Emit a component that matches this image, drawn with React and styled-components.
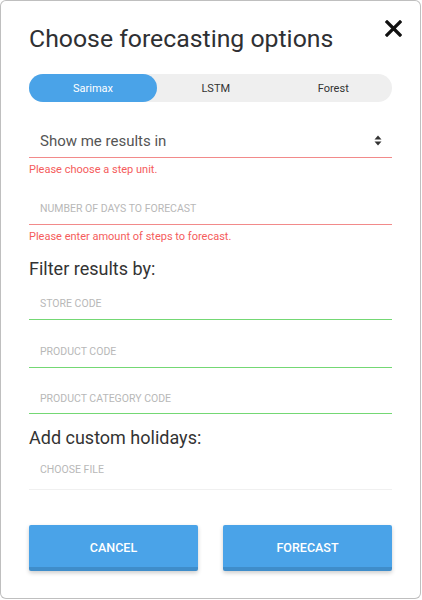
import styled, { createGlobalStyle } from "styled-components";

const GlobalStyle = createGlobalStyle`
  html, body {
    margin: 0;
    padding: 0;
    background: #fff;
  }
  * {
    box-sizing: border-box;
  }
`;

const Modal = styled.div`
  width: 421px;
  height: 599px;
  background: #fff;
  border: 1px solid rgba(0, 0, 0, 0.25);
  border-radius: 6px;
  font-family: Roboto, "Liberation Sans", sans-serif;
  padding: 0 28px 0 28px;
  display: flex;
  flex-direction: column;
`;

const Header = styled.div`
  display: flex;
  justify-content: space-between;
  align-items: flex-start;
  padding-top: 21px;
  height: 73px;
`;

const Title = styled.h1`
  margin: 0;
  font-size: 24.8px;
  font-weight: 400;
  color: #2f3033;
  line-height: 34px;
`;

const Close = styled.button`
  border: none;
  background: none;
  padding: 0;
  margin-top: -2px;
  margin-right: -11px;
  width: 20px;
  height: 20px;
  cursor: pointer;
`;

const Tabs = styled.div`
  display: grid;
  grid-template-columns: 128px 1fr 1fr;
  height: 28px;
  background: #efefef;
  border-radius: 14px;
`;

const Tab = styled.div`
  display: flex;
  align-items: center;
  justify-content: center;
  font-size: 11px;
  border-radius: 14px;
  color: ${(p) => (p.$active ? "#fff" : "#333")};
  background: ${(p) => (p.$active ? "#4aa3e8" : "transparent")};
`;

// input row with a coloured underline
const Field = styled.div`
  display: flex;
  align-items: center;
  justify-content: space-between;
  height: ${(p) => p.$h}px;
  padding: 0 10px 0 11px;
  border-bottom: 1px solid ${(p) => p.$line};
`;

const SelectText = styled.span`
  font-size: 15px;
  color: #555;
  padding-top: 22px;
`;

const Placeholder = styled.span`
  font-size: 10.5px;
  color: #b8b8b8;
  padding-top: ${(p) => p.$pt || 0}px;
`;

const ErrorText = styled.div`
  font-size: 11px;
  color: #f55c5c;
  margin-top: 5px;
  line-height: 14px;
`;

const Section = styled.h2`
  margin: ${(p) => p.$mt}px 0 0;
  font-size: 18px;
  font-weight: 400;
  color: #333;
  line-height: 22px;
`;

const Buttons = styled.div`
  display: flex;
  justify-content: space-between;
  margin-top: 35px;
`;

const Button = styled.button`
  width: 169px;
  height: 46px;
  border: none;
  border-bottom: 4px solid #3f8dca;
  border-radius: 2px;
  background: #4aa3e8;
  color: #fff;
  font-family: Roboto, "Liberation Sans", sans-serif;
  font-size: 12.5px;
  font-weight: 500;
  box-shadow: 0 2px 4px rgba(0, 0, 0, 0.2);
  padding-top: 4px;
`;

const SortIcon = () => (
  <svg width="8" height="11" viewBox="0 0 8 11" style={{ marginTop: 22 }}>
    <path d="M4 0.5 L7.5 4.5 H0.5 Z" fill="#333" />
    <path d="M4 10.5 L7.5 6.5 H0.5 Z" fill="#333" />
  </svg>
);

export default function App() {
  return (
    <>
      <GlobalStyle />
      <Modal>
        <Header>
          <Title>Choose forecasting options</Title>
          <Close aria-label="close">
            <svg width="17" height="17" viewBox="0 0 17 17">
              <path
                d="M2 2 L15 15 M15 2 L2 15"
                stroke="#111"
                strokeWidth="3.2"
                strokeLinecap="square"
              />
            </svg>
          </Close>
        </Header>
        <Tabs>
          <Tab $active>Sarimax</Tab>
          <Tab>LSTM</Tab>
          <Tab>Forest</Tab>
        </Tabs>
        <Field $h={56} $line="#f28a8a">
          <SelectText>Show me results in</SelectText>
          <SortIcon />
        </Field>
        <ErrorText>Please choose a step unit.</ErrorText>
        <Field $h={48} $line="#f28a8a">
          <Placeholder $pt={15}>NUMBER OF DAYS TO FORECAST</Placeholder>
        </Field>
        <ErrorText>Please enter amount of steps to forecast.</ErrorText>
        <Section $mt={14}>Filter results by:</Section>
        <Field $h={40} $line="#74d874">
          <Placeholder $pt={8}>STORE CODE</Placeholder>
        </Field>
        <Field $h={48} $line="#74d874">
          <Placeholder $pt={16}>PRODUCT CODE</Placeholder>
        </Field>
        <Field $h={46} $line="#74d874">
          <Placeholder $pt={16}>PRODUCT CATEGORY CODE</Placeholder>
        </Field>
        <Section $mt={13}>Add custom holidays:</Section>
        <Field $h={41} $line="#f0f0f0">
          <Placeholder>CHOOSE FILE</Placeholder>
        </Field>
        <Buttons>
          <Button>CANCEL</Button>
          <Button>FORECAST</Button>
        </Buttons>
      </Modal>
    </>
  );
}
